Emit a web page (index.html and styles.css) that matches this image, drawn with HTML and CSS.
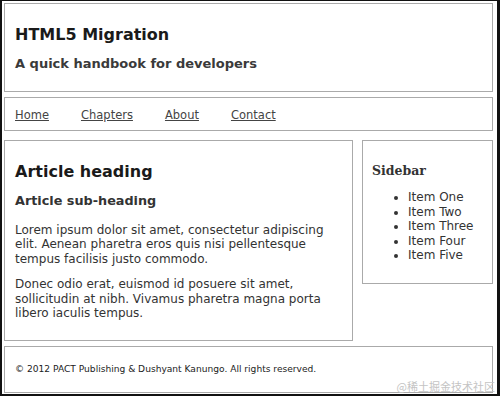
FILE: index.html
```html
<html lang="en">
<head>
    <meta charset="UTF-8">
    <title>HTML5 Migration</title>
    <link rel="stylesheet" href="styles.css">
</head>
<body>
    <div class="page">
        <header class="masthead">
            <h1>HTML5 Migration</h1>
            <h2>A quick handbook for developers</h2>
        </header>

        <nav class="menu">
            <a href="#">Home</a>
            <a href="#">Chapters</a>
            <a href="#">About</a>
            <a href="#">Contact</a>
        </nav>

        <div class="content">
            <article class="article">
                <h1>Article heading</h1>
                <h2>Article sub-heading</h2>
                <p>Lorem ipsum dolor sit amet, consectetur adipiscing elit. Aenean pharetra eros quis nisi pellentesque tempus facilisis justo commodo.</p>
                <p>Donec odio erat, euismod id posuere sit amet, sollicitudin at nibh. Vivamus pharetra magna porta libero iaculis tempus.</p>
            </article>

            <aside class="sidebar">
                <h3>Sidebar</h3>
                <ul>
                    <li>Item One</li>
                    <li>Item Two</li>
                    <li>Item Three</li>
                    <li>Item Four</li>
                    <li>Item Five</li>
                </ul>
            </aside>
        </div>

        <footer class="footer">
            <p>&copy; 2012 PACT Publishing &amp; Dushyant Kanungo. All rights reserved.</p>
        </footer>

        <span class="watermark">@稀土掘金技术社区</span>
    </div>
</body>
</html>
```

FILE: styles.css
```css
body {
    margin: 0;
    font-family: 'DejaVu Sans', Verdana, sans-serif;
    color: #333333;
    background-color: #ffffff;
}

.page {
    position: relative;
    width: 500px;
    height: 396px;
    box-sizing: border-box;
    border: 1px solid #111111;
    border-left-width: 2px;
    border-right-width: 3px;
    border-bottom-width: 2px;
    padding: 2px 0 0 2px;
    display: flex;
    flex-direction: column;
    gap: 5px;
}

.masthead,
.menu,
.article,
.sidebar,
.footer {
    border: 1px solid #aaaaaa;
    box-sizing: border-box;
}

.masthead {
    width: 489px;
    height: 89px;
    padding: 21px 10px 0;
}

.masthead h1 {
    margin: 0 0 12px;
    font-size: 16px;
    color: #1a1a1a;
}

.masthead h2 {
    margin: 0;
    font-size: 13px;
    color: #3a3a3a;
}

.menu {
    width: 489px;
    height: 34px;
    padding: 10px 10px 0;
    display: flex;
}

.menu a {
    font-size: 11.5px;
    color: #444444;
    margin-right: 32px;
}

.content {
    display: flex;
    align-items: flex-start;
    gap: 9px;
    margin-top: 4px;
}

.article {
    width: 349px;
    height: 201px;
    padding: 21px 10px 0;
}

.article h1 {
    margin: 0 0 12px;
    font-size: 16px;
    color: #1a1a1a;
}

.article h2 {
    margin: 0 0 15px;
    font-size: 12.8px;
    color: #333333;
}

.article p {
    margin: 0 0 11.5px;
    font-size: 12px;
    line-height: 14.3px;
}

.sidebar {
    width: 131px;
    height: 144px;
    padding: 22px 9px 0;
}

.sidebar h3 {
    margin: 0 0 12px;
    font-family: 'DejaVu Serif', Georgia, serif;
    font-size: 12.5px;
    color: #333333;
}

.sidebar ul {
    margin: 0;
    padding-left: 36px;
    font-size: 12px;
    line-height: 14.5px;
}

.footer {
    width: 489px;
    height: 47px;
    padding: 17px 10px 0;
}

.footer p {
    margin: 0;
    font-size: 9.1px;
    color: #222222;
}

/* site watermark over the bottom-right corner */
.watermark {
    position: absolute;
    right: 2px;
    bottom: 1px;
    font-family: 'Noto Sans CJK SC', sans-serif;
    font-size: 11px;
    line-height: 13px;
    color: #c4c4c4;
}
```
